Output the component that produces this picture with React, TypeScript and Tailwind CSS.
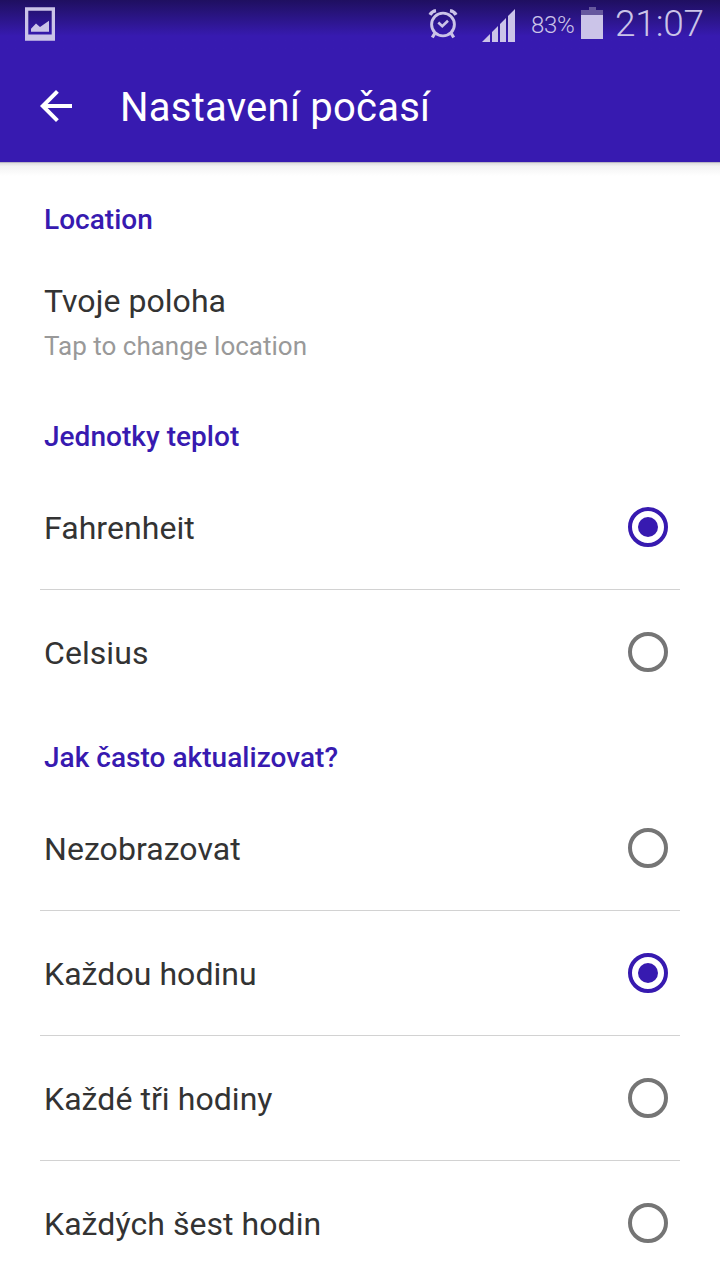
const FONT = "font-['Roboto','Noto_Sans',sans-serif]";

function StatusBar() {
  return (
    <div className="flex h-[50px] items-start bg-linear-to-b from-[#1f0f60] to-[#371ab0] to-72% text-[#cbc4e8]">
      <svg className="mt-[7px] ml-[25px] h-[34px] w-[30px]" viewBox="0 0 30 34" fill="currentColor">
        <path fillRule="evenodd" d="M0 .3H30V33.7H0ZM3.3 3.8V27.5H26.7V3.8Z" />
        <path d="M6 24.8V21.8L11 16.5L15 20L24 13.7V24.8Z" />
      </svg>
      <svg className="mt-[8px] ml-[373px] h-[32px] w-[30px]" viewBox="0 0 30 32" fill="none" stroke="currentColor">
        <circle cx="15" cy="16.5" r="11.4" strokeWidth="2.9" />
        <path d="M10.3 14.5L14.3 18.3L20 12.8" strokeWidth="2.6" />
        <path d="M2 6.8Q4 3.2 8 2.6M28 6.8Q26 3.2 22 2.6" strokeWidth="3.4" />
        <path d="M6.7 25.5L4.3 29.5M23.3 25.5L25.7 29.5" strokeWidth="3.2" />
      </svg>
      <svg className="mt-[9px] ml-[24px] h-[33px] w-[34px]" viewBox="0 0 34 33" fill="currentColor">
        <path d="M0 33L8 25V33ZM10 33V23L16 17V33ZM18 33V15L24 9V33ZM26 33V7L33 0V33Z" />
      </svg>
      <span className="mt-[11px] ml-[15px] w-[44px] text-[24px] leading-[28px] font-light tracking-[-0.3px] whitespace-nowrap">83%</span>
      <svg className="mt-[7px] ml-[6px] h-[32px] w-[22px]" viewBox="0 0 22 32" fill="currentColor">
        <path d="M8 0H15V3H22V8H0V3H8Z" fill="#66589d" />
        <path d="M0 8H22V32H0Z" />
      </svg>
      <span className="mt-[2px] ml-[12px] text-[37px] leading-[44px] font-light tracking-[-0.2px] whitespace-nowrap">21:07</span>
    </div>
  );
}

function AppBar() {
  return (
    <div className="flex h-[112px] items-start bg-[#371ab0] text-white">
      <svg className="mt-[40px] ml-[40px] h-[32px] w-[32px]" viewBox="4 4 16 16" fill="currentColor">
        <path d="M20 11H7.83l5.59-5.59L12 4l-8 8 8 8 1.41-1.41L7.83 13H20v-2z" />
      </svg>
      <h1 className="mt-[34px] ml-[48px] text-[40px] leading-[48px] font-normal tracking-[0.25px] whitespace-nowrap">
        Nastavení počasí
      </h1>
    </div>
  );
}

function Heading({ children }: { children: string }) {
  return (
    <h2 className="h-[72px] pt-[28px] pl-[44px] text-[28px] leading-[32px] font-medium tracking-[0.03px] whitespace-nowrap text-[#371ab0]">
      {children}
    </h2>
  );
}

function Radio({ checked }: { checked?: boolean }) {
  return (
    <span
      className={
        checked
          ? "mr-[12px] flex size-[40px] items-center justify-center rounded-full border-4 border-[#371ab0]"
          : "mr-[12px] flex size-[40px] rounded-full border-4 border-[#757575]"
      }
    >
      {checked && <span className="size-[20px] rounded-full bg-[#371ab0]" />}
    </span>
  );
}

type Option = { label: string; checked?: boolean };

function Options({ items }: { items: Option[] }) {
  return (
    <div className="mx-[40px] divide-y divide-[#d2d2d2]">
      {items.map(({ label, checked }) => (
        <div key={label} className="box-content flex h-[124px] items-center justify-between">
          <span className="pt-[2px] pl-[4px] text-[32px] leading-[38px] tracking-[0.06px] whitespace-nowrap text-[#333333]">
            {label}
          </span>
          <Radio checked={checked} />
        </div>
      ))}
    </div>
  );
}

export default function App() {
  return (
    <div className={`flex h-[1280px] w-[720px] flex-col overflow-hidden bg-white ${FONT}`}>
      <header className="shrink-0">
        <StatusBar />
        <AppBar />
      </header>
      <div className="h-[14px] shrink-0 border-t border-[#b9b6c4] bg-linear-to-b from-[#dedede] via-[#f3f3f3] via-25% to-white" />
      <main>
        <Heading>Location</Heading>
        <div className="h-[145px] pt-[34px] pl-[44px]">
          <div className="text-[32px] leading-[38px] tracking-[0.06px] text-[#333333]">Tvoje poloha</div>
          <div className="mt-[11px] text-[26px] leading-[30px] text-[#999999]">Tap to change location</div>
        </div>
        <Heading>Jednotky teplot</Heading>
        <Options items={[{ label: "Fahrenheit", checked: true }, { label: "Celsius" }]} />
        <Heading>Jak často aktualizovat?</Heading>
        <Options
          items={[
            { label: "Nezobrazovat" },
            { label: "Každou hodinu", checked: true },
            { label: "Každé tři hodiny" },
            { label: "Každých šest hodin" },
          ]}
        />
      </main>
    </div>
  );
}
